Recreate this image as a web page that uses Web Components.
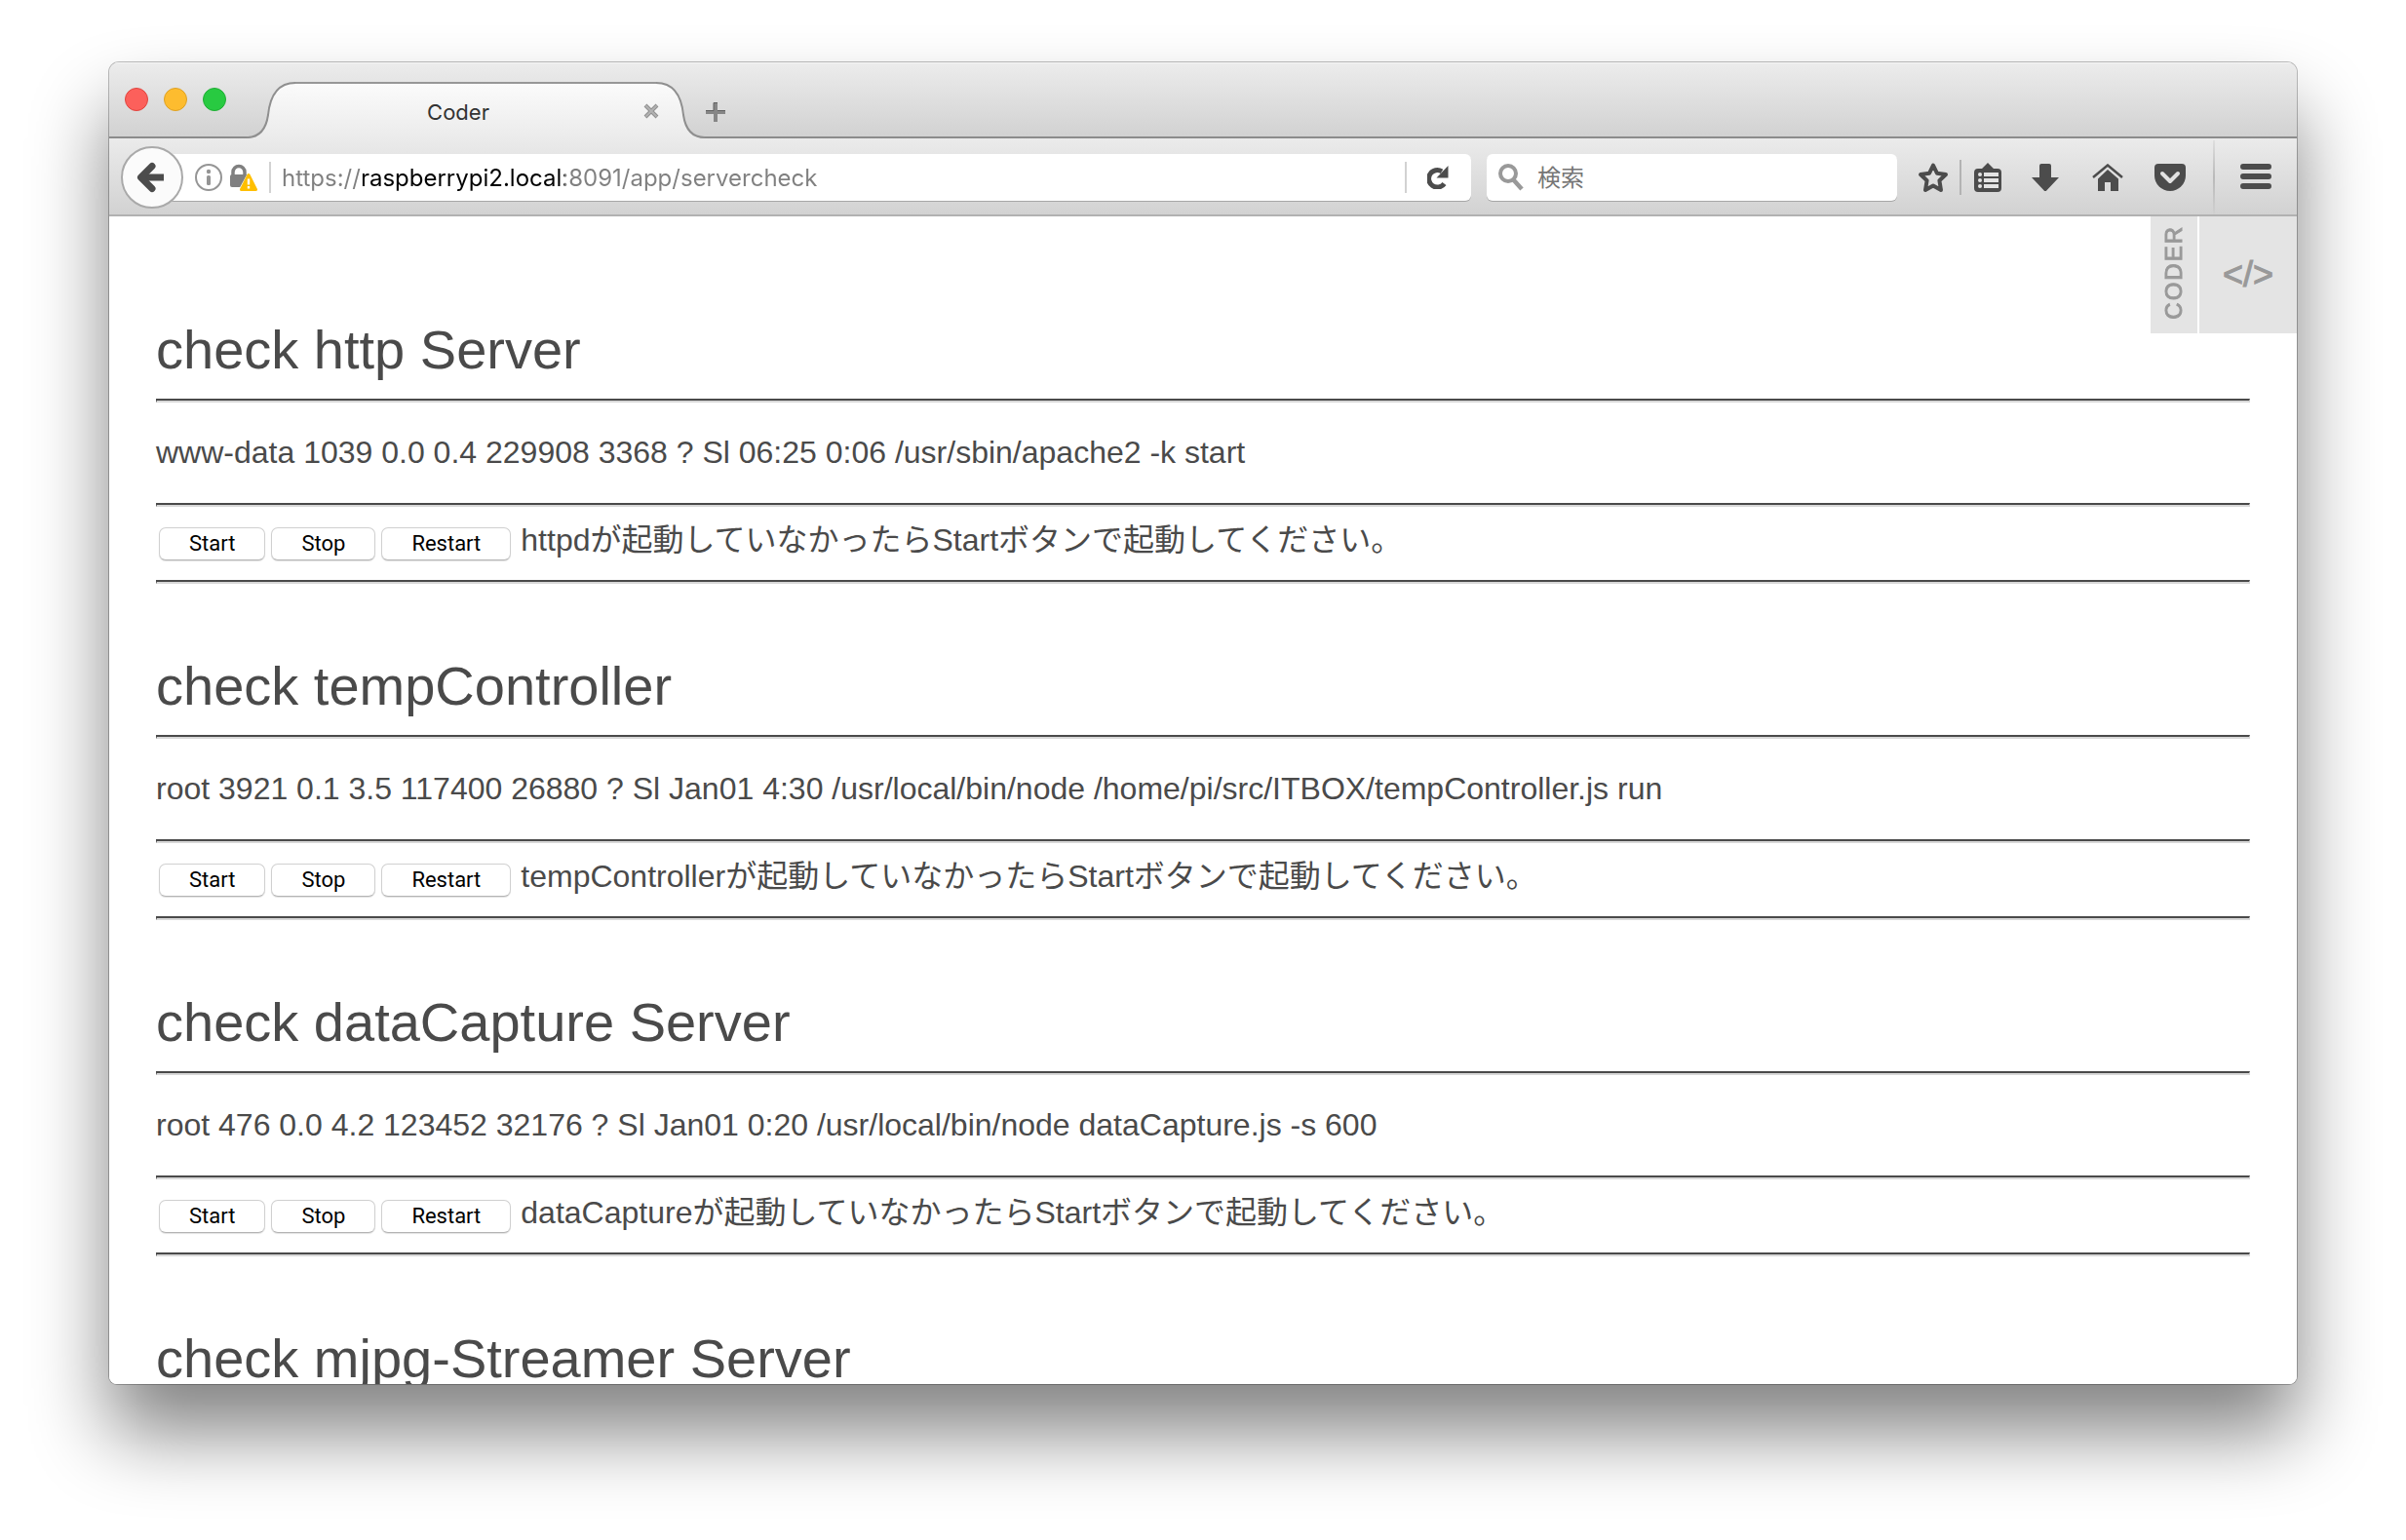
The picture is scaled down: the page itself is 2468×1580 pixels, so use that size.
<!DOCTYPE html>
<html lang="ja">
<head>
<meta charset="utf-8">
<title>Coder</title>
<style>
  html, body { height: 100%; margin: 0; }
  body {
    box-sizing: border-box;
    padding: 64px 112px 160px;
    background: #fff;
    overflow: hidden;
    font-family: Inter, "Noto Sans CJK JP", sans-serif;
    font-size: 22px;
  }
</style>
</head>
<body>
<browser-window>
  <tab-strip slot="tabs"><browser-tab>Coder</browser-tab></tab-strip>
  <nav-bar slot="toolbar"></nav-bar>
  <coder-menu slot="corner"></coder-menu>
  <server-check name="check http Server" service="httpd">www-data 1039 0.0 0.4 229908 3368 ? Sl 06:25 0:06 /usr/sbin/apache2 -k start</server-check>
  <server-check name="check tempController" service="tempController">root 3921 0.1 3.5 117400 26880 ? Sl Jan01 4:30 /usr/local/bin/node /home/pi/src/ITBOX/tempController.js run</server-check>
  <server-check name="check dataCapture Server" service="dataCapture">root 476 0.0 4.2 123452 32176 ? Sl Jan01 0:20 /usr/local/bin/node dataCapture.js -s 600</server-check>
  <server-check name="check mjpg-Streamer Server"></server-check>
</browser-window>

<script>
const define = (name, render) => customElements.define(name, class extends HTMLElement {
  connectedCallback() {
    if (!this.shadowRoot) this.attachShadow({ mode: "open" }).innerHTML = render(this);
  }
});

const buttonReset = `
  *, *::before, *::after { box-sizing: border-box; }
  button { border: 0; padding: 0; margin: 0; background: none; font: inherit; color: inherit;
    display: flex; align-items: center; justify-content: center; flex: none; }
  svg { display: block; flex: none; }`;

define("browser-window", () => `
  <style>
    :host { display: flex; flex-direction: column; height: 100%; border-radius: 10px 10px 8px 8px;
      box-shadow: 0 0 0 1px rgba(0,0,0,.26), 0 50px 80px rgba(0,0,0,.49); background: #fff; }
    .chrome { flex: none; border-radius: 10px 10px 0 0; overflow: hidden; }
    main { position: relative; flex: 1; min-height: 0; overflow: hidden; padding: 105px 48px 0;
      border-radius: 0 0 8px 8px; background: #fff; }
    .corner { position: absolute; top: 0; right: 0; }
  </style>
  <div class="chrome"><slot name="tabs"></slot><slot name="toolbar"></slot></div>
  <main><slot></slot><div class="corner"><slot name="corner"></slot></div></main>`);

define("tab-strip", () => `
  <style>${buttonReset}
    :host { display: flex; align-items: flex-end; height: 78px; padding-left: 16px; box-sizing: border-box;
      background: linear-gradient(#ececec, #d1d1d1);
      box-shadow: inset 0 1px #f6f6f6, inset 0 -2px #8c8c8c; }
    .lights { display: flex; gap: 16px; height: 76px; align-items: center; align-self: flex-start; margin-right: 21px; }
    .lights button { width: 24px; height: 24px; border-radius: 50%; border: 1px solid var(--edge); background: var(--fill); }
    .close { --fill: #fc605b; --edge: #e0443e; }
    .min { --fill: #fdbc2f; --edge: #dea123; }
    .max { --fill: #28ca41; --edge: #1fae34; }
    .add { width: 22px; height: 56px; }
  </style>
  <div class="lights">
    <button class="close" aria-label="Close window"></button>
    <button class="min" aria-label="Minimize"></button>
    <button class="max" aria-label="Zoom"></button>
  </div>
  <slot></slot>
  <button class="add" aria-label="New tab"><svg width="20" height="56" viewBox="0 0 20 56">
    <path d="M0 29h20M10 19v20" stroke="#868686" stroke-width="4"/><path d="M0 27.500h8v-8h4" stroke="#606060" fill="none"/><path d="M12 27.500h8" stroke="#606060"/></svg></button>`);

define("browser-tab", () => `
  <style>${buttonReset}
    :host { display: flex; width: 470px; height: 58px; flex: none; color: #333; }
    .body { flex: 1; min-width: 0; display: flex; border-top: 2px solid #979797;
      background: linear-gradient(#fbfbfb, #ebebeb); }
    .title { flex: 1; text-align: center; line-height: 58px; }
    .body button { position: relative; z-index: 1; width: 62px; height: 56px; margin-right: -26px; }
  </style>
  <svg width="50" height="58" viewBox="0 0 50 58">
    <defs><linearGradient id="g" x2="0" y2="1"><stop stop-color="#fbfbfb"/><stop offset="1" stop-color="#ebebeb"/></linearGradient></defs>
    <path d="M0 58C14 57 20 48 22 34C24 14 32 1 50 1V58Z" fill="url(#g)"/>
    <path d="M0 57C14 57 20 48 22 34C24 14 32 1 50 1" fill="none" stroke="#8f8f8f" stroke-width="2"/></svg>
  <div class="body"><span class="title"><slot></slot></span>
    <button aria-label="Close tab"><svg width="16" height="16" viewBox="0 0 16 16"><path d="M2 2l12 12M14 2L2 14" stroke="#8e8e8e" stroke-width="4"/><path d="M2.500 2.500l11 11M13.500 2.500l-11 11" stroke="#b2b2b2" stroke-width="2"/></svg></button></div>
  <svg width="50" height="58" viewBox="0 0 50 58">
    <defs><linearGradient id="g" x2="0" y2="1"><stop stop-color="#fbfbfb"/><stop offset="1" stop-color="#ebebeb"/></linearGradient></defs>
    <path d="M50 58C36 57 30 48 28 34C26 14 18 1 0 1V58Z" fill="url(#g)"/>
    <path d="M50 57C36 57 30 48 28 34C26 14 18 1 0 1" fill="none" stroke="#8f8f8f" stroke-width="2"/></svg>`);

define("nav-bar", () => `
  <style>${buttonReset}
    :host { display: flex; align-items: center; height: 80px; padding: 2px 0 0 12px; box-sizing: border-box;
      background: linear-gradient(#ebebeb, #d2d2d2); border-bottom: 2px solid #b1b1b1; color: #4c4c4c; }
    .back { position: relative; z-index: 1; width: 64px; height: 64px; border-radius: 50%;
      background: #fbfbfb; border: 2px solid #a9a9a9; }
    .field { display: flex; align-items: center; height: 48px; background: #fff; border-radius: 6px;
      box-shadow: 0 1px #a6a6a6; min-width: 0; }
    .url { flex: 1309 1 0; margin-left: -16px; padding-left: 28px; }
    .search { flex: 409 1 0; margin-left: 16px; padding-left: 12px; }
    .lock { margin-left: 7px; }
    .bar { width: 2px; height: 32px; background: #d2d2d2; flex: none; }
    .url .first { margin: 0 11px 0 12px; }
    input { flex: 1; min-width: 0; height: 40px; border: 0; padding: 0; margin: 0; outline: 0; background: none;
      font: inherit; font-size: 24px; color: #808080; }
    .url input { -webkit-text-fill-color: transparent;
      background: linear-gradient(90deg, #808080 83px, #000 83px, #000 290px, #808080 290px);
      -webkit-background-clip: text; background-clip: text; }
    .search input { margin-left: 14px; }
    .search input::placeholder { color: #757575; opacity: 1; }
    .reload { width: 66px; height: 48px; padding-right: 2px; }
    .tool { width: 64px; height: 64px; }
    .narrow { width: 54px; }
    .star { margin-left: 10px; }
    .split { height: 36px; background: #b3b3b3; }
    .full { height: 76px; margin-left: 12px; background: linear-gradient(#dedede, #b9b9b9 50%, #d0d0d0); }
    .menu { width: 84px; height: 64px; }
  </style>
  <button class="back" aria-label="Back"><svg width="60" height="60" viewBox="0 0 60 60">
    <path d="M20 30H42" stroke="#4c4c4c" stroke-width="7"/><path d="M30 18.500L18.500 30l11.500 11.500" fill="none" stroke="#4c4c4c" stroke-width="7" stroke-linecap="round" stroke-linejoin="round"/></svg></button>
  <div class="field url">
    <svg width="28" height="28" viewBox="0 0 28 28"><circle cx="14" cy="14" r="13" fill="none" stroke="#959595" stroke-width="2"/><circle cx="14" cy="8" r="2.200" fill="#959595"/><rect x="12" y="12" width="4" height="10" rx="1.500" fill="#959595"/></svg>
    <svg class="lock" width="29" height="28" viewBox="0 0 29 28"><path d="M4 13V8.500a6 6 0 0 1 12 0V13" fill="none" stroke="#808080" stroke-width="3.500"/><rect x="1" y="11" width="18" height="13" rx="2" fill="#808080"/><path d="M20 8L31 28H9z" fill="#fff"/><path d="M20 11.500L27.500 26.500h-15z" fill="#ffbf00" stroke="#ffbf00" stroke-width="3" stroke-linejoin="round"/><path d="M20 15.500v6M20 23v2.500" stroke="#fff" stroke-width="2.400"/></svg>
    <span class="bar first"></span>
    <input type="text" aria-label="URL" value="https://raspberrypi2.local:8091/app/servercheck">
    <span class="bar"></span>
    <button class="reload" aria-label="Reload"><svg width="22" height="24" viewBox="0 0 22 24"><path d="M17.500 18.500A8.800 8.800 0 1 1 15 5.800" fill="none" stroke="#4c4c4c" stroke-width="5"/><path d="M21.500 0v12.500H9.500z" fill="#4c4c4c"/></svg></button>
  </div>
  <div class="field search">
    <svg width="26" height="28" viewBox="0 0 26 28"><circle cx="10" cy="10" r="8" fill="none" stroke="#999" stroke-width="4"/><path d="M15.500 16.500L24 26" stroke="#999" stroke-width="4.500"/></svg>
    <input type="search" aria-label="検索" placeholder="検索">
  </div>
  <button class="tool narrow star" aria-label="Bookmark"><svg width="32" height="32" viewBox="0 0 32 32"><path d="M16 3.500L19.900 11.700 29 13 22.400 19.200 24 29 16 24.400 8 29 9.600 19.200 3 13 12.100 11.700Z" fill="none" stroke="#4c4c4c" stroke-width="4" stroke-linejoin="round"/></svg></button>
  <span class="bar split"></span>
  <button class="tool narrow" aria-label="Bookmarks list"><svg width="28" height="30" viewBox="0 0 28 30"><path d="M4 6h4l6-6 6 6h4a4 4 0 0 1 4 4v16a4 4 0 0 1-4 4H4a4 4 0 0 1-4-4V10a4 4 0 0 1 4-4z" fill="#4c4c4c"/><g fill="#e4e4e4"><circle cx="6" cy="12" r="2"/><circle cx="6" cy="18" r="2"/><circle cx="6" cy="24" r="2"/><rect x="10" y="10" width="15" height="4"/><rect x="10" y="16" width="15" height="4"/><rect x="10" y="22" width="15" height="4"/></g></svg></button>
  <button class="tool" aria-label="Downloads"><svg width="28" height="28" viewBox="0 0 28 28"><path d="M10 0h8a2 2 0 0 1 2 2v12h8L15.500 27.300a2 2 0 0 1-3 0L0 14h8V2a2 2 0 0 1 2-2z" fill="#4c4c4c"/></svg></button>
  <button class="tool" aria-label="Home"><svg width="32" height="28" viewBox="0 0 32 28"><path d="M1 14L16 1.500 31 14" fill="none" stroke="#4c4c4c" stroke-width="2.500"/><path d="M16 6L27 15.500V28h-8V19h-6v9H6V15.500z" fill="#4c4c4c"/></svg></button>
  <button class="tool" aria-label="Pocket"><svg width="32" height="28" viewBox="0 0 32 28"><path d="M4 0h24a4 4 0 0 1 4 4v8a16 16 0 0 1-32 0V4a4 4 0 0 1 4-4z" fill="#4c4c4c"/><path d="M8 10l8 8 8-8" fill="none" stroke="#e2e2e2" stroke-width="4" stroke-linecap="round" stroke-linejoin="round"/></svg></button>
  <span class="bar full"></span>
  <button class="menu" aria-label="Menu"><svg width="32" height="28" viewBox="0 0 32 28"><path d="M3 3h26M3 13h26M3 23h26" stroke="#4c4c4c" stroke-width="6" stroke-linecap="round"/></svg></button>`);

define("coder-menu", () => `
  <style>
    :host { display: flex; gap: 2px; height: 120px; font-family: "Liberation Sans", Arial, sans-serif; }
    a { display: flex; align-items: center; justify-content: center; box-sizing: border-box; background: #e4e4e4;
      color: #999; text-decoration: none; -webkit-text-stroke: 1px #999; }
    .name { width: 48px; padding-bottom: 6px; font-size: 24px; letter-spacing: 2px; }
    .name span { writing-mode: vertical-rl; transform: rotate(180deg); line-height: 28px; }
    .code { width: 100px; font-size: 36px; }
  </style>
  <a class="name" href="#coder"><span>CODER</span></a>
  <a class="code" href="#editor">&lt;/&gt;</a>`);

define("push-button", () => `
  <style>
    :host { display: block; }
    button { display: block; box-sizing: border-box; height: 34px; padding: 0 30px; font: inherit; font-size: 22px;
      line-height: 32px; color: #000; background: #fff; border: 1px solid #d0d0d0; border-bottom-color: #b4b4b4;
      border-radius: 7px; box-shadow: 0 1px 1px rgba(0,0,0,.12); }
  </style>
  <button type="button"><slot></slot></button>`);

define("server-check", el => {
  const service = el.getAttribute("service");
  return `
  <style>
    :host { display: block; margin-bottom: 73px; color: #4a4a4a; font-family: "Liberation Sans", Arial, "Noto Sans CJK JP", sans-serif; }
    h1 { margin: 0 0 18px; font-size: 56px; font-weight: 400; line-height: 64px; }
    hr { margin: 0; border: 2px solid; border-color: #4a4a4a #d8d8d8 #d8d8d8 #4a4a4a; border-left-width: 1px; border-right-width: 1px; }
    p { margin: 31px 0 32px; font-size: 32px; line-height: 40px; }
    .actions { display: flex; align-items: baseline; gap: 6px; height: 75px; padding: 14px 0 0 3px; box-sizing: border-box; }
    .actions span { margin-left: 4px; font-size: 32px; line-height: 40px; }
    push-button { font-family: Roboto, Inter, sans-serif; }
  </style>
  <h1>${el.getAttribute("name")}</h1>
  <hr>
  ${service ? `<p><slot></slot></p>
  <hr>
  <div class="actions">
    <push-button>Start</push-button><push-button>Stop</push-button><push-button>Restart</push-button>
    <span>${service}が起動していなかったらStartボタンで起動してください。</span>
  </div>
  <hr>` : ""}`;
});
</script>
</body>
</html>
